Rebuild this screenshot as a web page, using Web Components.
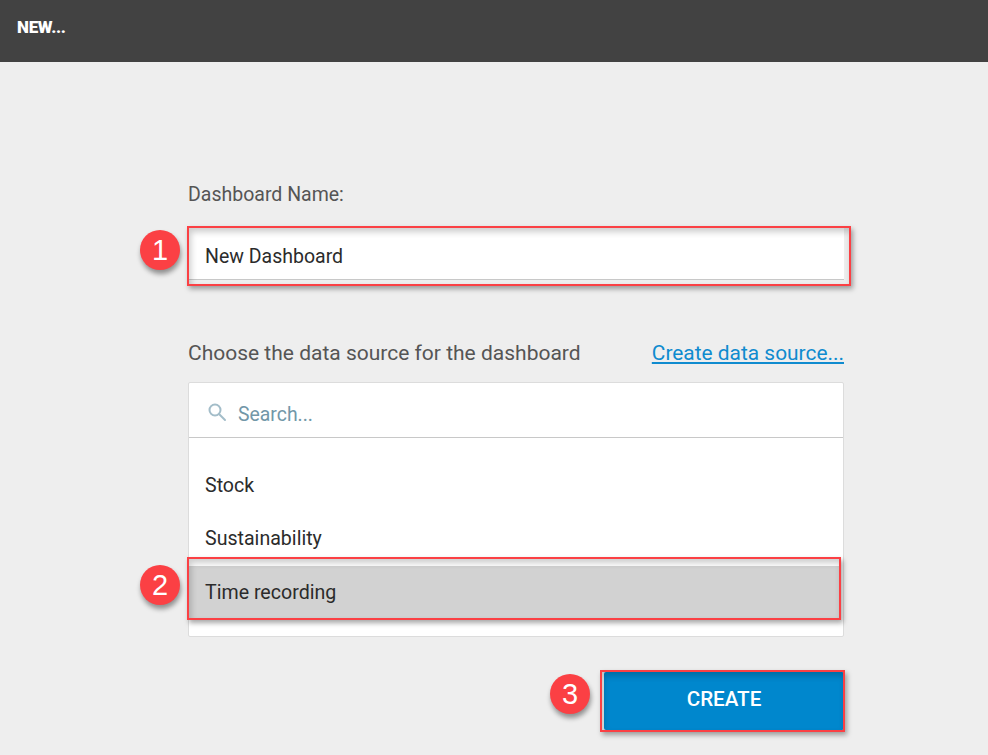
<!DOCTYPE html>
<html>
<head>
<meta charset="utf-8">
<title>New dashboard</title>
<style>
  html, body { margin: 0; padding: 0; background: #eeeeee; }
  body { font-family: Roboto, "Liberation Sans", sans-serif; height: 755px; overflow: hidden; }
</style>
</head>
<body>
<new-dashboard-page></new-dashboard-page>

<script>
// red rectangle + drop shadow from the annotation tool
class RedMark extends HTMLElement {
    constructor() {
        super();
        this.attachShadow({mode: "open"}).innerHTML = `
<style>
    :host {
        display: block;
        position: absolute;
        box-sizing: border-box;
        border: 2px solid #fb4044;
        box-shadow: 2px 3px 5px rgba(0,0,0,0.35), inset 2px 4px 6px rgba(0,0,0,0.2);
        pointer-events: none;
    }
</style>`;
    }
}
customElements.define('red-mark', RedMark);

class StepBadge extends HTMLElement {
    constructor() {
        super();
        this.attachShadow({mode: "open"}).innerHTML = `
<style>
    :host {
        display: flex;
        position: absolute;
        width: 40px;
        height: 40px;
        border-radius: 50%;
        background: #fb4044;
        color: #fff;
        font: 400 29px "Liberation Sans", Arial, sans-serif;
        align-items: center;
        justify-content: center;
        box-shadow: 1px 4px 5px rgba(0,0,0,0.4);
    }
</style>
<slot></slot>`;
    }
}
customElements.define('step-badge', StepBadge);

class AppHeader extends HTMLElement {
    constructor() {
        super();
        this.attachShadow({mode: "open"}).innerHTML = `
<style>
    :host {
        display: flex;
        height: 62px;
        background: #424242;
        color: #fff;
        padding: 18px 0 0 17px;
        box-sizing: border-box;
        font: 900 17px/18px Roboto, sans-serif;
        letter-spacing: -0.3px;
    }
</style>
<slot></slot>`;
    }
}
customElements.define('app-header', AppHeader);

class NameField extends HTMLElement {
    constructor() {
        super();
        this.attachShadow({mode: "open"}).innerHTML = `
<style>
    :host { display: block; position: relative; }
    label {
        display: block;
        font-size: 19.5px;
        line-height: 24px;
        color: #555;
        padding-top: 1px;
        margin-bottom: 19px;
    }
    .box {
        height: 54px;
        background: #fff;
        border-bottom: 1px solid #c8c8c8;
        box-sizing: border-box;
        padding: 16px 17px 0 17px;
        font-size: 19.5px;
        line-height: 30px;
        color: #2b2b2b;
    }
    red-mark { left: -1px; top: 44px; width: 664px; height: 60px; }
    step-badge { left: -48px; top: 48px; }
</style>
<label>Dashboard Name:</label>
<div class="box"><slot></slot></div>
<red-mark></red-mark>
<step-badge>1</step-badge>`;
    }
}
customElements.define('name-field', NameField);

class SourceRow extends HTMLElement {
    constructor() {
        super();
        this.attachShadow({mode: "open"}).innerHTML = `
<style>
    :host {
        display: flex;
        align-items: center;
        height: 53.5px;
        padding-left: 16px;
        font-size: 19.6px;
        color: #2b2b2b;
    }
    :host([selected]) { background: #d2d2d2; margin-right: 3px; }
</style>
<slot></slot>`;
    }
}
customElements.define('source-row', SourceRow);

class SourceList extends HTMLElement {
    constructor() {
        super();
        this.attachShadow({mode: "open"}).innerHTML = `
<style>
    :host {
        display: block;
        position: relative;
        height: 255px;
        box-sizing: border-box;
        background: #fff;
        border: 1px solid #dcdcdc;
        border-radius: 2px;
    }
    .search {
        display: flex;
        align-items: center;
        gap: 11px;
        height: 55px;
        box-sizing: border-box;
        padding: 8px 0 0 18px;
        border-bottom: 1px solid #c8c8c8;
        font-size: 19.4px;
        color: #7297a8;
    }
    svg { display: block; flex: none; margin-top: -4px; }
    .rows { padding-top: 20.5px; }
    red-mark { left: -2px; top: 174px; width: 654px; height: 63px; }
    step-badge { left: -49px; top: 182px; }
</style>
<div class="search">
    <svg width="20" height="20" viewBox="0 0 20 20" fill="none" stroke="#a3bdc9" stroke-width="2">
        <circle cx="8" cy="8" r="5.5"/>
        <path d="M12 12l6 6" stroke-linecap="round"/>
    </svg>
    <span>Search...</span>
</div>
<div class="rows"><slot></slot></div>
<red-mark></red-mark>
<step-badge>2</step-badge>`;
    }
}
customElements.define('source-list', SourceList);

class CreateButton extends HTMLElement {
    constructor() {
        super();
        this.attachShadow({mode: "open"}).innerHTML = `
<style>
    :host {
        display: flex;
        position: relative;
        width: 240px;
        height: 58px;
        align-items: center;
        justify-content: center;
        background: #0087cd;
        border-radius: 2px;
        color: #fff;
        font-weight: 500;
        font-size: 20.6px;
        padding-bottom: 4px;
        box-sizing: border-box;
    }
    red-mark { left: -4px; top: -2px; width: 245px; height: 62px; }
    step-badge { left: -54px; top: 2px; }
</style>
<slot></slot>
<red-mark></red-mark>
<step-badge>3</step-badge>`;
    }
}
customElements.define('create-button', CreateButton);

class NewDashboardPage extends HTMLElement {
    constructor() {
        super();
        this.attachShadow({mode: "open"}).innerHTML = `
<style>
    :host { display: block; }
    main {
        width: 656px;
        padding: 120px 0 0 188px;
    }
    .source-head {
        display: flex;
        justify-content: space-between;
        align-items: baseline;
        margin: 61px 0 17px;
        font-size: 21px;
        line-height: 24px;
        color: #555;
    }
    a { color: #0f8bcf; text-decoration: underline; font-size: 20.9px; }
    .actions { display: flex; justify-content: flex-end; margin-top: 35px; }
</style>
<app-header>NEW...</app-header>
<main>
    <name-field>New Dashboard</name-field>
    <div class="source-head">
        <span>Choose the data source for the dashboard</span>
        <a href="#">Create data source...</a>
    </div>
    <source-list>
        <source-row>Stock</source-row>
        <source-row>Sustainability</source-row>
        <source-row selected>Time recording</source-row>
    </source-list>
    <div class="actions"><create-button>CREATE</create-button></div>
</main>`;
    }
}
customElements.define('new-dashboard-page', NewDashboardPage);
</script>
</body>
</html>
